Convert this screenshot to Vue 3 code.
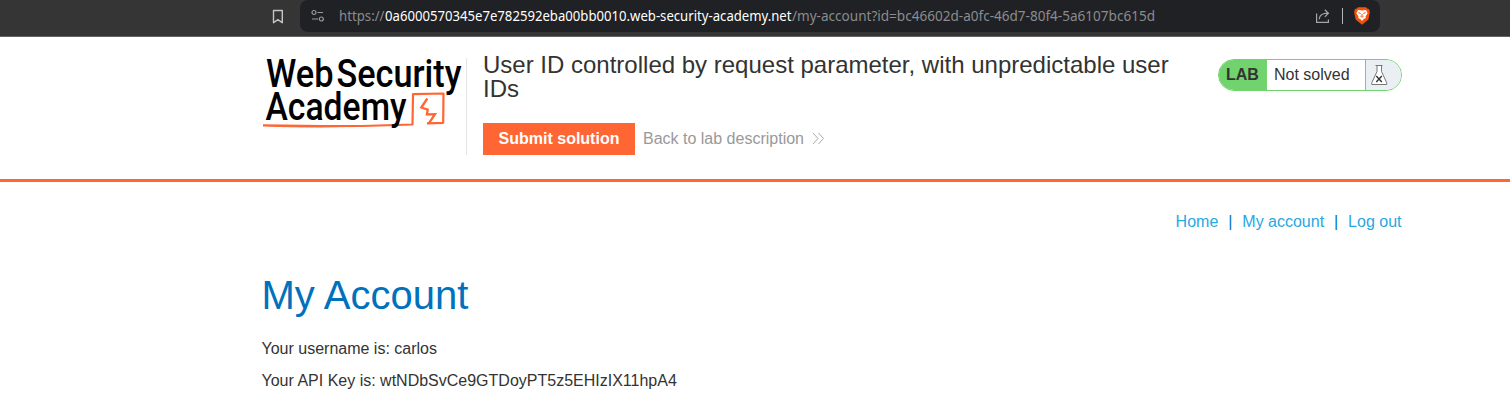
<script setup>
const links = ['Home', 'My account', 'Log out']
</script>

<template>
  <div class="page">
    <div class="toolbar">
      <svg class="bookmark" width="12" height="16" viewBox="0 0 12 16"><path d="M1.5 1.5h8.8v12.2L5.9 10.6 1.5 13.7z" fill="none" stroke="#c4c4c4" stroke-width="1.4" stroke-linejoin="round" /></svg>
      <div class="address">
        <svg class="tune" width="14" height="14" viewBox="0 0 14 14" fill="none" stroke="#97999c" stroke-width="1.2">
          <circle cx="3" cy="3.5" r="2" /><path d="M6.5 3.5H12M1 10h6" /><circle cx="10.3" cy="10" r="2" />
        </svg>
        <svg class="url" width="820" height="32">
          <text x="0" y="21" textLength="45.5" lengthAdjust="spacingAndGlyphs">https://</text>
          <text class="host" x="46" y="21" textLength="406.5" lengthAdjust="spacingAndGlyphs">0a6000570345e7e782592eba00bb0010.web-security-academy.net</text>
          <text x="453" y="21" textLength="363" lengthAdjust="spacingAndGlyphs">/my-account?id=bc46602d-a0fc-46d7-80f4-5a6107bc615d</text>
        </svg>
        <svg class="share" width="16" height="16" viewBox="0 0 16 16" fill="none" stroke="#a5a6a8" stroke-width="1.2">
          <path d="M1.6 5.5v8.9h11.8v-3M4.2 11.2c.3-4 2.8-6 8.8-6M9.8 1.8l3.6 3.4-3.6 3.6" />
        </svg>
        <span class="rule"></span>
        <svg class="shield" width="16" height="18" viewBox="0 0 16 18">
          <path d="M4 .3h8l1.5 1.5 1.5.2.9 3-1.5 7.5L8 17.8 1.6 12.5.1 5 1 2l1.5-.2z" fill="#f4500b" />
          <path d="M4 2.9l4 .7 4-.7 1.6 3.3-2.1 3.3.4 1.4-2.2 1.2L8 14l-1.7-1.9-2.2-1.2.4-1.4L2.4 6.2z" fill="#fff" />
          <path d="M4.4 5.7l2.3.8M11.6 5.7l-2.3.8M8 7v2.1M6.4 9.1L8 10.2l1.6-1.1" fill="none" stroke="#f4500b" stroke-width="1" />
        </svg>
      </div>
    </div>

    <header>
      <div class="container head">
        <svg class="logo" width="204" height="80" viewBox="0 0 204 80">
          <path d="M1 72.3L60 73.2 100 73 150.5 71.5 151 41.2 181.5 40.5 181.2 69.8 165 70.3" fill="none" stroke="#ff6633" stroke-width="2.2" stroke-linejoin="round" />
          <path d="M1 72.3C20 74.5 60 74.2 100 73" fill="none" stroke="#ff6633" stroke-width="1" />
          <path d="M165.3 45.5l-6 9 6.4 2.1-.8 4.8 8.1-.2-6.2 9.2" fill="none" stroke="#ff6633" stroke-width="2.3" />
          <text x="4" y="34.4" textLength="67.5" lengthAdjust="spacingAndGlyphs">Web</text>
          <text x="74.5" y="34.4" textLength="125" lengthAdjust="spacingAndGlyphs">Security</text>
          <text x="3.5" y="67" textLength="141" lengthAdjust="spacingAndGlyphs">Academy</text>
        </svg>
        <div class="title">
          <h2>User ID controlled by request parameter, with unpredictable user IDs</h2>
          <div class="actions">
            <button>Submit solution</button>
            <a class="back">Back to lab description</a>
            <svg width="13" height="14" viewBox="0 0 13 14" fill="none" stroke="#aaa" stroke-width="1"><path d="M1 1l5 5.5-5 5.5M6.5 1l5 5.5-5 5.5" /></svg>
          </div>
        </div>
        <div class="status">
          <b>LAB</b>
          <span>Not solved</span>
          <i><svg width="18" height="22" viewBox="0 0 18 22" fill="none" stroke="#777" stroke-width="1">
            <path d="M5.5 1.5h7M7 1.5v6L1.8 18.7v1.8h14.9v-1.8L11.5 7.5v-6" fill="#fff" /><path d="M6.3 12l5.5 6M11.8 12l-5.5 6" stroke="#333" stroke-width="1.4" />
          </svg></i>
        </div>
      </div>
    </header>

    <main class="container">
      <nav>
        <template v-for="(link, i) in links" :key="link">
          <span v-if="i" class="bar">|</span><a>{{ link }}</a>
        </template>
      </nav>
      <h1>My Account</h1>
      <p>Your username is: carlos</p>
      <p>Your API Key is: wtNDbSvCe9GTDoyPT5z5EHIzIX11hpA4</p>
    </main>
  </div>
</template>

<style>
body { margin: 0; background: #fff; }
</style>

<style scoped>
.page { height: 402px; overflow: hidden; font: 16px/24px "Liberation Sans", Arial, sans-serif; color: #333332; background: #fff; }
.page * { box-sizing: border-box; }
.toolbar { display: flex; height: 37px; background: #353535; border-bottom: 1px solid #626262; }
.bookmark { margin: 9px 16px 0 272px; flex: none; }
.address { display: flex; width: 1080px; height: 32px; background: #202124; border-radius: 8px; }
.tune { margin: 9px 14px 0 11px; flex: none; }
.url { flex: none; overflow: visible; font: 14.5px "Noto Sans", sans-serif; fill: #8a8c8f; }
.host { fill: #fff; }
.share { margin: 8px 11px 0 156px; flex: none; }
.rule { width: 1px; height: 16px; margin-top: 8px; background: #b5b5b5; flex: none; }
.shield { margin: 7px 0 0 11px; flex: none; }
.container { width: 1140px; margin-left: 261.5px; }
header { height: 145px; border-bottom: 3px solid #ff6633; }
.head { display: flex; margin-left: 262px; padding-top: 16px; }
.logo { flex: none; overflow: visible; font: 500 38px Roboto, sans-serif; fill: #000; }
.title { width: 712px; height: 102px; padding-left: 17px; position: relative; }
.title::before { content: ""; position: absolute; left: 0; top: 5px; width: 1px; height: 97px; background: #e3e3e3; }
h2 { margin: 0; font-size: 24px; line-height: 24px; font-weight: 400; }
.actions { display: flex; align-items: center; margin-top: 22px; }
button { width: 152px; height: 32px; padding: 0; border: 0; background: #ff6633; color: #fff; font: bold 16px "Liberation Sans", Arial, sans-serif; }
.back { margin: 0 8px; color: #999; white-space: nowrap; }
.status { display: flex; width: 184px; height: 32px; margin: 6px 0 0 40px; border: 1px solid #70d36d; border-radius: 16px; overflow: hidden; line-height: 30px; }
.status b { width: 48px; padding-left: 7px; background: #70d36d; }
.status span { width: 98px; padding-left: 7px; }
.status i { flex: 1; border-left: 1px solid #70d36d; background: #eaeff3; padding: 4px 0 0 4px; }
.status svg { display: block; }
nav { display: flex; justify-content: flex-end; padding-top: 28px; color: #29a7df; }
.bar { width: 24px; text-align: center; color: #0071bc; }
h1 { margin: 37px 0 18px; font-size: 40px; line-height: 48px; font-weight: 400; color: #0071bc; }
p { margin: 0 0 8px; }
</style>
